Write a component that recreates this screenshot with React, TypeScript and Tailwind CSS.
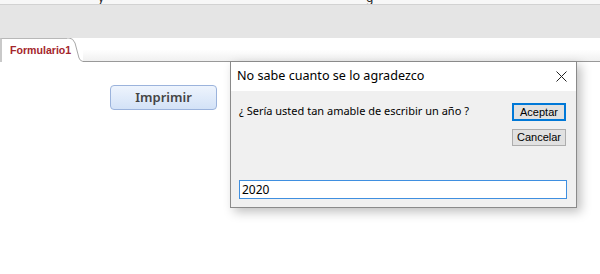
import * as React from 'react';

const uiFont = { fontFamily: '"Noto Sans", "Open Sans", sans-serif' };
const winFont = { fontFamily: '"Liberation Sans", Arial, sans-serif' };

const Dialog = () => {
  return (
    <div
      className="absolute left-[230px] top-[61px] w-[347px] h-[147px] border border-[#8a8a8a] bg-[#f0f0f0] shadow-[4px_4px_10px_rgba(0,0,0,0.25)] flex flex-col"
      style={uiFont}
    >
      <div className="h-[29px] bg-white flex items-center justify-between pl-[6px] pr-[9px]">
        <span className="text-[12.6px] text-black">No sabe cuanto se lo agradezco</span>
        <svg width="11" height="11" viewBox="0 0 11 11">
          <path d="M0.5 0.5 L10.5 10.5 M10.5 0.5 L0.5 10.5" stroke="#222" strokeWidth="1" />
        </svg>
      </div>
      <div className="flex-1 flex flex-col px-[8px]">
        <div className="flex justify-between pt-[12px]">
          <span className="text-[11px] text-black">¿ Sería usted tan amable de escribir un año ?</span>
          <div className="flex flex-col gap-[8px] mr-[2px]" style={winFont}>
            <button className="w-[54px] h-[18px] border-2 border-[#0078d7] bg-[#e1e1e1] text-[11px] leading-none text-black">
              Aceptar
            </button>
            <button className="w-[54px] h-[17px] border border-[#adadad] bg-[#e1e1e1] text-[11px] leading-none text-black">
              Cancelar
            </button>
          </div>
        </div>
        <div className="mt-[34px] h-[19px] mr-[1px] border border-[#3f8fe0] bg-white flex items-center px-[2px] text-[12px] text-black">
          2020
        </div>
      </div>
    </div>
  );
};

const App = () => {
  return (
    <div className="w-[600px] h-[274px] bg-white relative overflow-hidden" style={uiFont}>
      <div className="h-[4px] overflow-hidden relative bg-[#f7f7f7]">
        <span className="absolute left-[98px] top-[-11px] text-[12px] text-[#222]">y</span>
        <span className="absolute left-[366px] top-[-11px] text-[12px] text-[#222]">g</span>
      </div>
      <div className="h-[34px] bg-[#e5e5e5] border-t border-[#d2d2d2]" />
      <div className="h-[24px] flex">
        <div className="w-[67px] border-t border-[#b8b8b8] border-l-2 border-l-[#c9c9c9] bg-white flex items-center pl-[8px]" style={winFont}>
          <span className="text-[10.6px] font-bold text-[#a4262c]">Formulario1</span>
        </div>
        <svg width="16" height="24" viewBox="0 0 16 24" className="shrink-0">
          <path d="M0 0 L2 0 Q6 0 8 5 L12 20 Q13 23 16 23.5" fill="none" stroke="#a8a8a8" strokeWidth="1" />
        </svg>
        <div className="flex-1 border-b border-[#999] bg-gradient-to-b from-white from-50% to-[#f0f0f0]" />
      </div>
      <div className="pt-[22px] pl-[110px]">
        <button className="w-[107px] h-[25px] rounded-[4px] border border-[#9bb3dc] bg-gradient-to-b from-[#eef4fd] to-[#d3e2f7] text-[13px] font-semibold text-[#444]">
          Imprimir
        </button>
      </div>
      <Dialog />
    </div>
  );
};

export default App;
